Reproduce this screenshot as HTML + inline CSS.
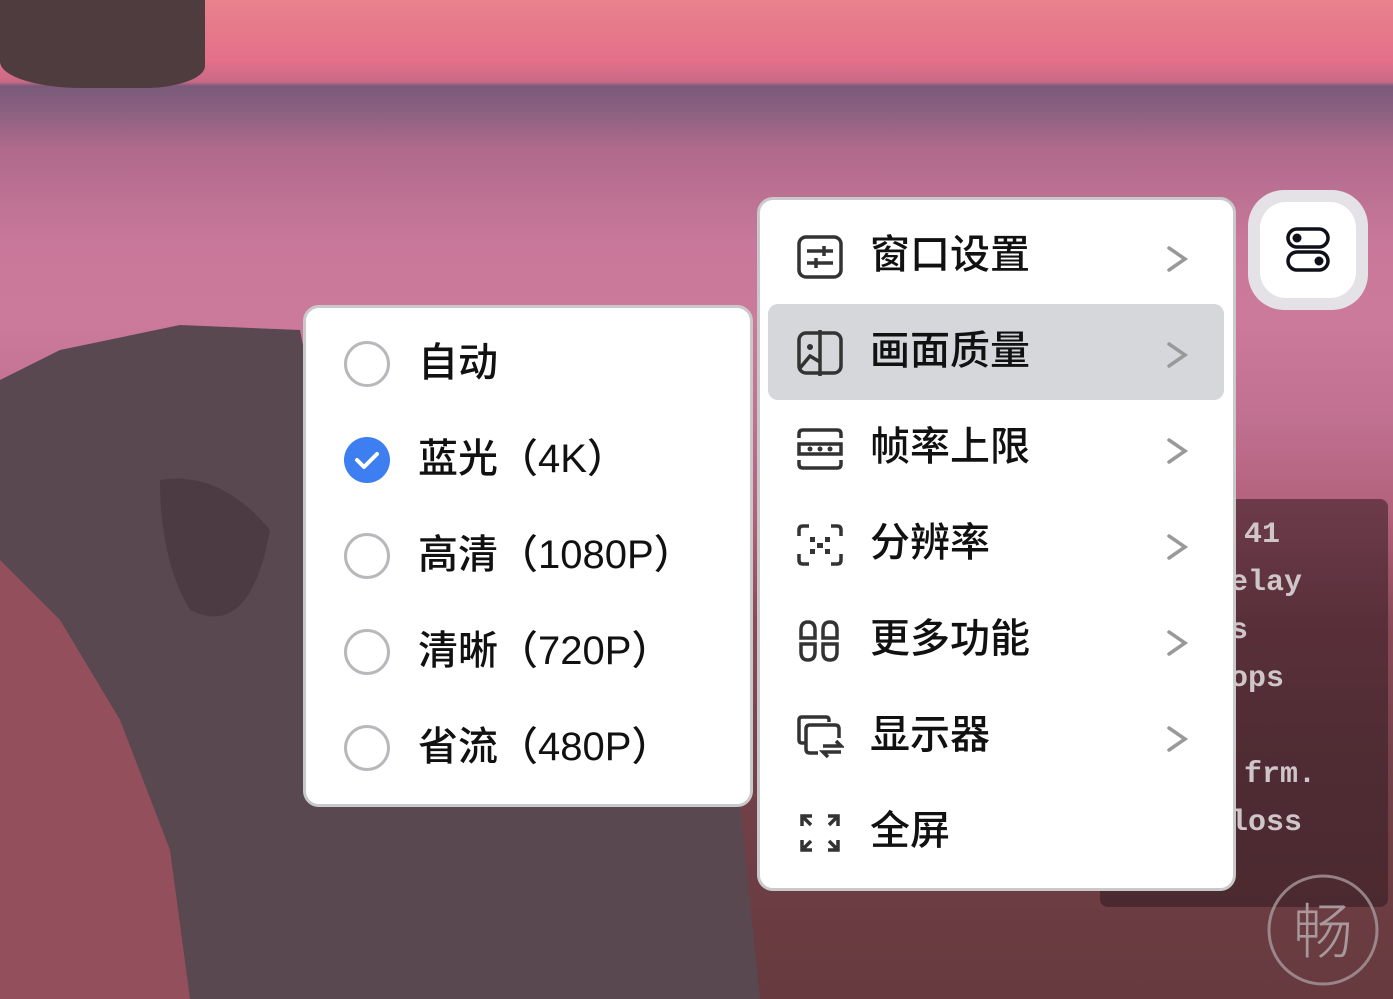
<!DOCTYPE html>
<html><head><meta charset="utf-8"><style>
*{margin:0;padding:0;box-sizing:border-box}
body{width:1393px;height:999px;overflow:hidden;position:relative;font-family:"Liberation Sans","Noto Sans CJK SC",sans-serif;
background:linear-gradient(180deg,#e8828c 0px,#e4708a 60px,#c86a86 82px,#7a5a7a 86px,#8a6080 110px,#b06a8c 150px,#c8789a 240px,#cc7a9c 320px,#c07090 420px,#b06078 520px,#8a4c58 620px,#74424a 760px,#663a3e 999px)}
.bg{position:absolute}
.menu{position:absolute;background:#fff;border:3px solid #c9c9cc;border-radius:16px}
.item{position:absolute;left:0;height:96px;font-size:40px;color:#111;font-weight:500}
.ico{position:absolute;left:36px;top:24px;width:48px;height:46px}
.txt{position:absolute;left:110px;top:20px;line-height:50px;white-space:nowrap}
.chev{position:absolute;left:405px;top:36px}
.radio{position:absolute;left:38px;top:23px;width:46px;height:46px;border:3px solid #b8b8bc;border-radius:50%}
.stats{position:absolute;left:1100px;top:499px;width:288px;height:408px;background:rgba(50,25,32,.55);border-radius:8px;font-family:"Liberation Mono",monospace;font-weight:bold;font-size:30px;color:#cfc6c9;line-height:48px;padding:12px 0 0 0}
</style></head><body>
<div class="bg" style="left:0;top:0;width:205px;height:88px;background:#4e3c3e;border-radius:0 0 30% 40%/0 0 25% 30%"></div>
<svg class="bg" style="left:0;top:0" width="1393" height="999">
<path d="M0 380 L60 350 L180 325 L300 330 L310 380 L700 420 L760 999 L0 999 Z" fill="#5a4850"/>
<path d="M0 560 L60 620 L120 720 L170 850 L190 999 L0 999 Z" fill="#a85262" opacity=".75"/>
<path d="M160 480 Q220 470 270 530 Q250 640 190 610 Q160 560 160 480Z" fill="#3e2e34" opacity=".5"/>
</svg>
<div class="stats"><div style="padding-left:144px">41</div><div style="padding-left:130px">elay</div><div style="padding-left:130px">s</div><div style="padding-left:130px">ops</div><div>&nbsp;</div><div style="padding-left:144px">frm.</div><div style="padding-left:130px">loss</div></div>
<svg class="bg" style="left:1266px;top:873px" width="114" height="114"><circle cx="57" cy="57" r="54" fill="none" stroke="#a8989c" stroke-width="3" opacity=".8"/><text x="57" y="80" text-anchor="middle" font-size="60" fill="#a8989c" font-family="Noto Sans CJK SC" font-weight="300">畅</text></svg>

<div style="position:absolute;left:1248px;top:190px;width:120px;height:120px;border-radius:36px;background:#e4e2e6"></div>
<div style="position:absolute;left:1260px;top:202px;width:96px;height:96px;border-radius:26px;background:#fff"></div>
<svg style="position:absolute;left:1284px;top:226px" width="48" height="48"><rect x="4" y="3" width="40" height="18" rx="9" fill="none" stroke="#0f0f1a" stroke-width="3.5"/><circle cx="13" cy="12" r="4.5" fill="#0f0f1a"/><rect x="4" y="26" width="40" height="18" rx="9" fill="none" stroke="#0f0f1a" stroke-width="3.5"/><circle cx="35" cy="35" r="4.5" fill="#0f0f1a"/></svg>

<div class="menu" style="left:757px;top:197px;width:479px;height:694px">
<div style="position:absolute;left:8px;top:104px;width:456px;height:96px;background:#d5d7db;border-radius:10px"></div>
<div class="item" style="top:10px;width:470px"><svg class="ico" viewBox="0 0 48 46"><rect x="3" y="3" width="42" height="40" rx="7" fill="none" stroke="#333" stroke-width="3.5"/><path d="M11 17H37M11 29H37M28 12V22M20 24V34" stroke="#333" stroke-width="3.5" fill="none"/></svg><span class="txt">窗口设置</span><svg class="chev" width="24" height="26"><path d="M4 2L20 13L4 24" stroke="#999" stroke-width="3.5" fill="none" stroke-linecap="round"/></svg></div>
<div class="item" style="top:106px;width:470px"><svg class="ico" viewBox="0 0 48 46"><rect x="3" y="3" width="42" height="40" rx="7" fill="none" stroke="#333" stroke-width="3.5"/><path d="M24 0V46M4 38L14 26L24 32" stroke="#333" stroke-width="3.5" fill="none"/><circle cx="14" cy="17" r="3" fill="#333"/></svg><span class="txt">画面质量</span><svg class="chev" width="24" height="26"><path d="M4 2L20 13L4 24" stroke="#999" stroke-width="3.5" fill="none" stroke-linecap="round"/></svg></div>
<div class="item" style="top:202px;width:470px"><svg class="ico" viewBox="0 0 48 46"><path d="M3 12V8Q3 4 7 4H41Q45 4 45 8V12M3 34V38Q3 42 7 42H41Q45 42 45 38V34M3 18H45V28H3Z" stroke="#333" stroke-width="3.5" fill="none"/><circle cx="14" cy="23" r="2.5" fill="#333"/><circle cx="24" cy="23" r="2.5" fill="#333"/><circle cx="34" cy="23" r="2.5" fill="#333"/></svg><span class="txt">帧率上限</span><svg class="chev" width="24" height="26"><path d="M4 2L20 13L4 24" stroke="#999" stroke-width="3.5" fill="none" stroke-linecap="round"/></svg></div>
<div class="item" style="top:298px;width:470px"><svg class="ico" viewBox="0 0 48 46"><path d="M13 4H7Q3 4 3 8V14M35 4H41Q45 4 45 8V14M13 42H7Q3 42 3 38V32M35 42H41Q45 42 45 38V32" stroke="#333" stroke-width="3.5" fill="none"/><g fill="#333"><rect x="14" y="15" width="5" height="5"/><rect x="29" y="15" width="5" height="5"/><rect x="21" y="21" width="6" height="5"/><rect x="14" y="27" width="5" height="5"/><rect x="29" y="27" width="5" height="5"/></g></svg><span class="txt">分辨率</span><svg class="chev" width="24" height="26"><path d="M4 2L20 13L4 24" stroke="#999" stroke-width="3.5" fill="none" stroke-linecap="round"/></svg></div>
<div class="item" style="top:394px;width:470px"><svg class="ico" viewBox="0 0 48 46"><g stroke="#333" stroke-width="3.5" fill="none"><path d="M5 20V12Q5 4 12 4Q19 4 19 12V20Z"/><path d="M27 20V12Q27 4 34 4Q41 4 41 12V20Z"/><path d="M5 26H19V34Q19 42 12 42Q5 42 5 34Z"/><path d="M27 26H41V34Q41 42 34 42Q27 42 27 34Z"/></g></svg><span class="txt">更多功能</span><svg class="chev" width="24" height="26"><path d="M4 2L20 13L4 24" stroke="#999" stroke-width="3.5" fill="none" stroke-linecap="round"/></svg></div>
<div class="item" style="top:490px;width:470px"><svg class="ico" viewBox="0 0 48 46"><g stroke="#333" stroke-width="3.5" fill="none"><path d="M33 8V6Q33 3 30 3H6Q3 3 3 6V26Q3 29 6 29H9"/><path d="M43 24V15Q43 11 39 11H14Q10 11 10 15V35Q10 39 14 39H22"/><path d="M27 32H45L40 27M45 38H27L32 43"/></g></svg><span class="txt">显示器</span><svg class="chev" width="24" height="26"><path d="M4 2L20 13L4 24" stroke="#999" stroke-width="3.5" fill="none" stroke-linecap="round"/></svg></div>
<div class="item" style="top:586px;width:470px"><svg class="ico" viewBox="0 0 48 46"><g stroke="#333" stroke-width="3.5" fill="none"><path d="M6 16V6H16M6 6L15 15"/><path d="M42 16V6H32M42 6L33 15"/><path d="M6 30V40H16M6 40L15 31"/><path d="M42 30V40H32M42 40L33 31"/></g></svg><span class="txt">全屏</span></div>
</div>

<div class="menu" style="left:303px;top:305px;width:450px;height:502px">
<div class="item" style="top:10px;width:440px"><span class="radio"></span><span class="txt" style="left:112px">自动</span></div>
<div class="item" style="top:106px;width:440px"><svg style="position:absolute;left:38px;top:23px" width="46" height="46"><circle cx="23" cy="23" r="23" fill="#3d7ef0"/><path d="M13 23L20 30L33 17" stroke="#fff" stroke-width="4" fill="none" stroke-linecap="round" stroke-linejoin="round"/></svg><span class="txt" style="left:112px">蓝光（4K）</span></div>
<div class="item" style="top:202px;width:440px"><span class="radio"></span><span class="txt" style="left:112px">高清（1080P）</span></div>
<div class="item" style="top:298px;width:440px"><span class="radio"></span><span class="txt" style="left:112px">清晰（720P）</span></div>
<div class="item" style="top:394px;width:440px"><span class="radio"></span><span class="txt" style="left:112px">省流（480P）</span></div>
</div>
</body></html>
